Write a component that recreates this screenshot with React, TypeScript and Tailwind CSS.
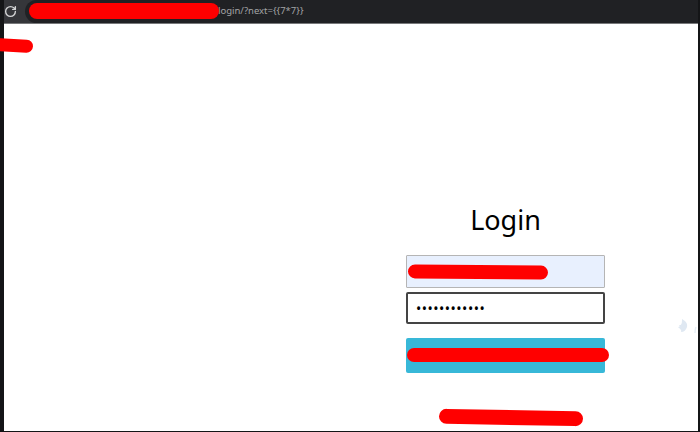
import { RotateCw } from "lucide-react";

function Scribble({ className }: { className: string }) {
  return <div className={`absolute rounded-full bg-[#ff0000] ${className}`} />;
}

export default function App() {
  return (
    <div className="relative flex h-[432px] w-[700px] flex-col overflow-hidden bg-[#141517] font-['Noto_Sans',sans-serif]">
      <header className="ml-[4px] mr-[2px] flex h-[24px] items-center border-b border-[#77787a] bg-[#35363a]">
        <div className="flex w-[21px] items-center">
          <RotateCw className="h-[13px] w-[13px] text-[#d4d5d6]" strokeWidth={2.5} />
        </div>
        <div className="flex h-full flex-1 items-center rounded-l-full bg-[#202124] pl-[193px] text-[9.5px] text-[#a3a4a6]">
          login/?next={"{{7*7}}"}
        </div>
      </header>

      <main className="ml-[4px] mr-[2px] mb-px flex flex-1 justify-end bg-white pr-[93px] pt-[180px]">
        <div className="flex w-[199px] flex-col">
          <h1 className="text-center text-[27px] leading-[32px] text-black">Login</h1>
          <input
            readOnly
            className="mt-[19px] h-[33px] w-full rounded-[1px] border border-[#b5b5b5] bg-[#e8f0fe]"
          />
          <input
            readOnly
            type="password"
            value="............"
            className="mt-[4px] h-[32px] w-full rounded-[2px] border-2 border-[#444] px-2 text-[14px] tracking-[0.5px] text-black"
          />
          <button className="mt-[14px] h-[35px] w-full rounded-[2px] bg-[#38b8d8]" />
        </div>
      </main>

      <Scribble className="left-[29px] top-[3px] h-[16px] w-[190px]" />
      <Scribble className="left-[-6px] top-[39px] h-[13px] w-[39px] rotate-[3deg]" />
      <Scribble className="left-[408px] top-[265px] h-[14px] w-[140px] rotate-[0.5deg]" />
      <Scribble className="left-[407px] top-[348px] h-[14px] w-[202px]" />
      <Scribble className="left-[439px] top-[410px] h-[15px] w-[144px] rotate-[1deg]" />

      <svg
        className="absolute left-[676px] top-[318px] h-[16px] w-[22px]"
        viewBox="0 0 22 16"
        fill="none"
      >
        <path d="M6 1c3 2 6 4 5 8-1 3-3 5-6 5 1-2-1-3-3-5 2 0 2-1 1-2 2 0 3 0 3-6Z" fill="#dfe8f2" />
        <path d="M20 9c-1 2-1 4-1 6" stroke="#e6eef6" strokeWidth="1.5" />
      </svg>
    </div>
  );
}
